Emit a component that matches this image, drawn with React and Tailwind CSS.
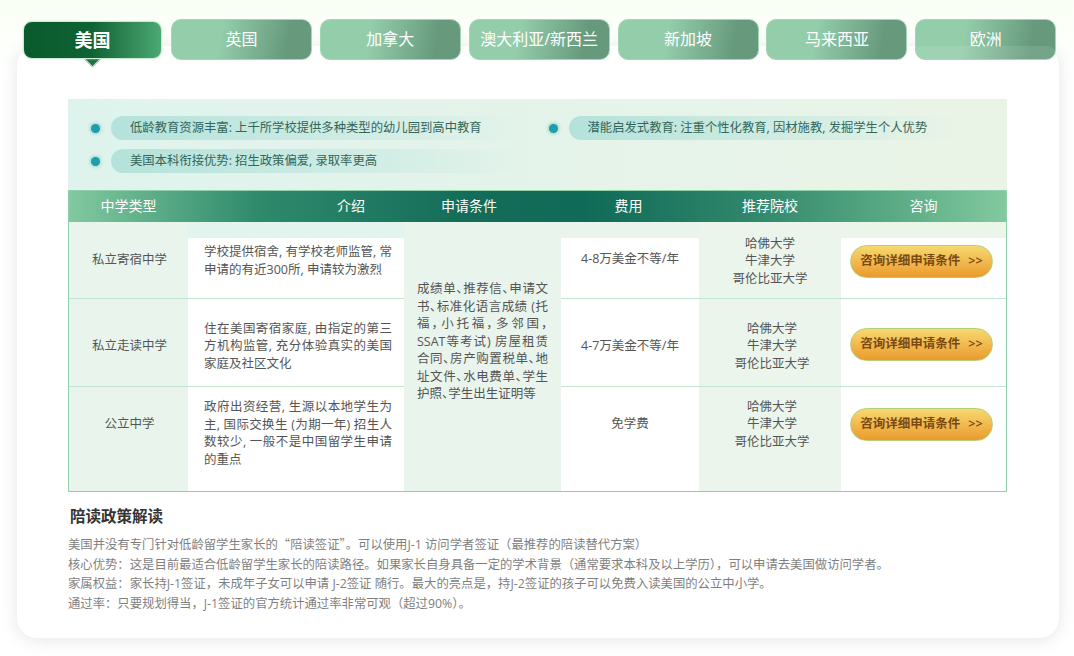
const tabs = ['英国', '加拿大', '澳大利亚/新西兰', '新加坡', '马来西亚', '欧洲'];
const schools = ['哈佛大学', '牛津大学', '哥伦比亚大学'];
const condLines = [
  '成绩单、推荐信、申请文',
  '书、标准化语言成绩 (托',
  '福，小托福，多邻国，',
  'SSAT等考试) 房屋租赁',
  '合同、房产购置税单、地',
  '址文件、水电费单、学生',
];

function Pill({ children, width }) {
  return (
    <div className="flex items-center">
      <span className="w-[9px] h-[9px] rounded-full bg-[#1f9cb0] shadow-[0_0_4px_#5cc4a4] mr-[11px]" />
      <div className={`${width} h-[24px] rounded-l-[12px] pl-[19px] flex items-center text-[12.33px] text-[#33665a] bg-gradient-to-r from-[#b4e2da] to-transparent`}>
        {children}
      </div>
    </div>
  );
}

function Btn() {
  return (
    <div className="w-[143px] h-[33px] rounded-full flex items-center justify-center gap-[8px] text-[12.5px] font-semibold text-[#7a4a12] border border-[#b3cf7a] bg-gradient-to-b from-[#f6d96e] to-[#ea9a2b]">
      <span>咨询详细申请条件</span>
      <span>&gt;&gt;</span>
    </div>
  );
}

function Schools({ className }) {
  return (
    <div className={`flex flex-col items-center justify-center bg-[#ebf5ec] ${className}`}>
      {schools.map((s) => (
        <div key={s}>{s}</div>
      ))}
    </div>
  );
}

export default function App() {
  return (
    <div className="w-[1074px] h-[656px] overflow-hidden bg-gradient-to-b from-[#fafff6] to-white to-[12%] font-['Open_Sans','Noto_Sans_CJK_SC',sans-serif]">
      <div className="relative z-10 flex items-start pl-[23px] pt-[19px] gap-[7.9px]">
        <div className="relative mt-[2px] mr-px w-[139px] h-[38px] rounded-[9px] border-[1.5px] border-[#cdebd2] shadow-[0_0_2px_#cdebd2] bg-gradient-to-r from-[#0a5a2c] via-[#0f6334] to-[#4ba973] flex items-center justify-center text-white text-[18px] font-bold">
          美国
          <span className="absolute left-[60px] top-[25px] w-[17px] h-[17px] rotate-45 bg-[#1f7044] border-r border-b border-[#cdebd2] -z-10" />
        </div>
        {tabs.map((t) => (
          <div
            key={t}
            className="relative overflow-hidden w-[141px] h-[41px] pb-[2px] rounded-[10px] border-[1.5px] border-[#a3d5b7] bg-[linear-gradient(100deg,#93cdaa_35%,#679a7d_82%)] flex items-center justify-center text-white text-[16px]"
          >
            {t}
            {t === '欧洲' && (
              <span className="absolute left-0 -right-[4px] bottom-0 h-[13px] rounded-tr-[20px] bg-white/10" />
            )}
          </div>
        ))}
      </div>

      <div className="relative ml-[17px] -mt-[14px] w-[1042px] h-[592px] rounded-[20px] bg-white shadow-[0_2px_18px_rgba(0,0,0,0.10)] pl-[51px] pt-[53px]">
        <div className="w-[939px] h-[91px] bg-gradient-to-r from-[#dff3ee] to-[#eaf4e6] pl-[23px] pt-[17px] flex flex-col gap-[9px]">
          <div className="flex gap-[19.5px]">
            <Pill width="w-[418px]">低龄教育资源丰富: 上千所学校提供多种类型的幼儿园到高中教育</Pill>
            <Pill width="w-[392px]">潜能启发式教育: 注重个性化教育, 因材施教, 发掘学生个人优势</Pill>
          </div>
          <Pill width="w-[418px]">美国本科衔接优势: 招生政策偏爱, 录取率更高</Pill>
        </div>

        <div className="w-[939px] border border-[#8fd0aa] grid grid-cols-[119px_216px_157px_138px_142px_165px] grid-rows-[31px_16px_60px_88px_105px] text-[12.5px] leading-[17.5px] text-[#555]">
          <div className="col-span-6 grid grid-cols-[119px_216px_157px_138px_142px_165px] bg-[linear-gradient(90deg,#82c99f_0%,#2f8a6c_20%,#146d59_42%,#0f6a57_55%,#2e8569_72%,#5aaa85_88%,#82c99f_100%)] text-white text-[14px] pb-px">
            <div className="flex items-center justify-center">中学类型</div>
            <div className="flex items-center justify-center pl-[110px]">介绍</div>
            <div className="flex items-center justify-center pr-[27px]">申请条件</div>
            <div className="flex items-center justify-center pr-[3px]">费用</div>
            <div className="flex items-center justify-center">推荐院校</div>
            <div className="flex items-center justify-center">咨询</div>
          </div>

          <div className="row-span-2 bg-[#e9f5ec] pl-[2px] flex items-center justify-center">私立寄宿中学</div>
          <div className="bg-[#e2f4ee]" />
          <div className="row-span-4 bg-[#e9f4ec] px-[13px] pb-[30px] flex flex-col justify-center [font-feature-settings:'palt']">
            {condLines.map((l) => (
              <div key={l} className="whitespace-nowrap [text-align-last:justify]">{l}</div>
            ))}
            <div>护照、学生出生证明等</div>
          </div>
          <div className="bg-[#e8f4ec]" />
          <Schools className="row-span-2 pt-[2px]" />
          <div className="bg-[#ebf5ea]" />

          <div className="bg-white pl-[16px] pr-[12px] pb-[15px] flex items-center text-justify">
            <p>学校提供宿舍, 有学校老师监管, 常申请的有近300所, 申请较为激烈</p>
          </div>
          <div className="bg-white pb-[18px] flex items-center justify-center">4-8万美金不等/年</div>
          <div className="bg-white pb-[14px] pl-[9px] flex items-center">
            <Btn />
          </div>

          <div className="border-t border-[#c0e4d0] bg-[#e9f5ec] pt-[7px] pl-[2px] flex items-center justify-center">私立走读中学</div>
          <div className="border-t border-[#c0e4d0] bg-white pl-[16px] pr-[12px] pt-[7px] flex items-center text-justify">
            <p>住在美国寄宿家庭, 由指定的第三方机构监管, 充分体验真实的美国家庭及社区文化</p>
          </div>
          <div className="border-t border-[#c0e4d0] bg-white pt-[7px] flex items-center justify-center">4-7万美金不等/年</div>
          <Schools className="border-t border-[#c0e4d0] pt-[7px] pl-[4px]" />
          <div className="border-t border-[#c0e4d0] bg-white pt-[3px] pl-[9px] flex items-center">
            <Btn />
          </div>

          <div className="border-t border-[#c0e4d0] bg-[#e9f5ec] pb-[30px] pl-[2px] flex items-center justify-center">公立中学</div>
          <div className="border-t border-[#c0e4d0] bg-white pl-[16px] pr-[12px] pb-[12px] flex items-center text-justify">
            <p>政府出资经营, 生源以本地学生为主, 国际交换生 (为期一年) 招生人数较少, 一般不是中国留学生申请的重点</p>
          </div>
          <div className="border-t border-[#c0e4d0] bg-white pb-[30px] flex items-center justify-center">免学费</div>
          <Schools className="border-t border-[#c0e4d0] pb-[30px] pl-[4px]" />
          <div className="border-t border-[#c0e4d0] bg-white pb-[30px] pl-[9px] flex items-center">
            <Btn />
          </div>
        </div>

        <h2 className="ml-[2px] mt-[13px] text-[15.5px] leading-[22px] font-bold text-[#333]">陪读政策解读</h2>
        <div className="mt-[8px] text-[12.35px] leading-[19.5px] text-[#7f7f7f]">
          <p>美国并没有专门针对低龄留学生家长的<span className="font-['Noto_Sans_CJK_SC']">“</span>陪读签证<span className="font-['Noto_Sans_CJK_SC']">”</span>。可以使用J-1 访问学者签证（最推荐的陪读替代方案）</p>
          <p>核心优势：这是目前最适合低龄留学生家长的陪读路径。如果家长自身具备一定的学术背景（通常要求本科及以上学历），可以申请去美国做访问学者。</p>
          <p>家属权益：家长持J-1签证，未成年子女可以申请 J-2签证 随行。最大的亮点是，持J-2签证的孩子可以免费入读美国的公立中小学。</p>
          <p>通过率：只要规划得当，J-1签证的官方统计通过率非常可观（超过90%）。</p>
        </div>
      </div>
    </div>
  );
}
